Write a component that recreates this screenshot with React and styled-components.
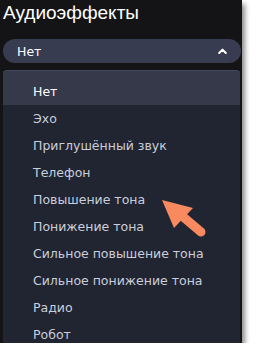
import styled, { createGlobalStyle } from "styled-components";

const GlobalStyle = createGlobalStyle`
  html, body {
    margin: 0;
    background: #ffffff;
  }
`;

const effects = [
  "Нет",
  "Эхо",
  "Приглушённый звук",
  "Телефон",
  "Повышение тона",
  "Понижение тона",
  "Сильное повышение тона",
  "Сильное понижение тона",
  "Радио",
  "Робот",
];

export default function App() {
  return (
    <>
      <GlobalStyle />
      <Panel>
        <Title>Аудиоэффекты</Title>
        <Select>
          <SelectValue>Нет</SelectValue>
          <svg width="9" height="6" viewBox="0 0 9 6">
            <path
              d="M1.2 5 L4.5 1.6 L7.8 5"
              fill="none"
              stroke="#ffffff"
              strokeWidth="2"
              strokeLinecap="round"
              strokeLinejoin="round"
            />
          </svg>
        </Select>
        <Menu>
          {effects.map((name, i) => (
            <Item key={name} $active={i === 0}>
              {name}
            </Item>
          ))}
        </Menu>
        <Pointer width="60" height="50" viewBox="0 0 60 50">
          <path d="M1 0 L32 8 L13 28 Z" fill="#f98a5f" />
          <path
            d="M20 15 L40 32"
            stroke="#f98a5f"
            strokeWidth="9"
            strokeLinecap="round"
          />
        </Pointer>
      </Panel>
    </>
  );
}

const Panel = styled.div`
  position: relative;
  width: 238px;
  height: 343px;
  padding: 0 1px 0 3px;
  overflow: hidden;
  background: #141416;
  box-shadow: 3px 4px 5px rgba(0, 0, 0, 0.45);
  font-family: "DejaVu Sans", Verdana, sans-serif;
  display: flex;
  flex-direction: column;
`;

const Title = styled.div`
  flex-shrink: 0;
  font-family: "Liberation Sans", Arial, sans-serif;
  font-size: 19px;
  line-height: 22px;
  color: #ffffff;
  padding-top: 2px;
  margin-bottom: 15px;
`;

const Select = styled.div`
  flex-shrink: 0;
  height: 24px;
  border-radius: 12px;
  background: #383c50;
  display: flex;
  align-items: center;
  justify-content: space-between;
  padding: 0 14px 0 14px;
  margin-bottom: 7px;
`;

const SelectValue = styled.span`
  font-size: 12.5px;
  color: #ffffff;
`;

const Menu = styled.div`
  flex: 1;
  margin-right: 1px;
  border-radius: 4px 4px 0 0;
  border-top: 1px solid #44485c;
  background: #212431;
  display: flex;
  flex-direction: column;
`;

const Item = styled.div`
  flex-shrink: 0;
  height: 27px;
  line-height: 27px;
  padding-top: ${(p) => (p.$active ? "7px" : "0")};
  padding-left: 30px;
  font-size: 12.5px;
  color: ${(p) => (p.$active ? "#ffffff" : "#c9cfdc")};
  background: ${(p) => (p.$active ? "#353949" : "transparent")};
`;

const Pointer = styled.svg`
  position: absolute;
  left: 161px;
  top: 200px;
`;
